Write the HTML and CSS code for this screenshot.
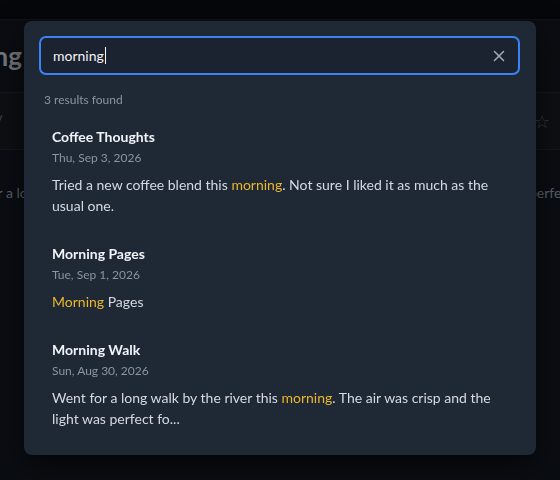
FILE: index.html
```html
<!DOCTYPE html>
<html lang="en">
<head>
<meta charset="utf-8">
<title>Journal — Search</title>
<link rel="stylesheet" href="styles.css">
</head>
<body>
  <!-- the journal page underneath the dialog -->
  <div class="page">
    <div class="topbar"></div>
    <header class="page-header">
      <div class="title-slot">
        <h1 class="page-title">Good Morning</h1>
      </div>
    </header>
    <div class="toolbar">
      <span class="tool-left">/</span>
      <span class="tool-right">&#x2606;</span>
    </div>
    <div class="page-body">
      <span class="text-start">for a long walk by the river this morning. The air was crisp and the light was</span>
      <span class="text-end">perfect for photos.</span>
    </div>
  </div>

  <div class="overlay">
    <div class="search-dialog">
      <div class="search-field">
        <span class="search-value">morning</span><span class="caret"></span>
        <button class="clear-btn" aria-label="Clear search">
          <svg width="12" height="12" viewBox="0 0 12 12" fill="none" stroke="currentColor" stroke-width="1.5" stroke-linecap="round">
            <path d="M1.5 1.5 L10.5 10.5 M10.5 1.5 L1.5 10.5"/>
          </svg>
        </button>
      </div>

      <div class="result-count">3 results found</div>

      <ul class="results">
        <li class="result">
          <div class="result-title">Coffee Thoughts</div>
          <div class="result-date">Thu, Sep 3, 2026</div>
          <p class="result-snippet">Tried a new coffee blend this <mark>morning</mark>. Not sure I liked it as much as the usual one.</p>
        </li>
        <li class="result">
          <div class="result-title">Morning Pages</div>
          <div class="result-date">Tue, Sep 1, 2026</div>
          <p class="result-snippet"><mark>Morning</mark> Pages</p>
        </li>
        <li class="result">
          <div class="result-title">Morning Walk</div>
          <div class="result-date">Sun, Aug 30, 2026</div>
          <p class="result-snippet">Went for a long walk by the river this <mark>morning</mark>. The air was crisp and the light was perfect fo...</p>
        </li>
      </ul>
    </div>
  </div>
</body>
</html>
```

FILE: styles.css
```css
* {
  box-sizing: border-box;
}

html, body {
  margin: 0;
  height: 100%;
}

body {
  background: #0a0d12;
  font-family: "Segoe UI", Lato, "Noto Sans", sans-serif;
  overflow: hidden;
}

/* ---------- page behind the dialog (already dimmed) ---------- */
.page {
  display: flex;
  flex-direction: column;
  height: 100%;
}

.topbar {
  height: 20px;
  background: #05070b;
  border-bottom: 1px solid #0f1217;
}

.page-header {
  height: 73px;
  background: #0b0d12;
  border-bottom: 1px solid #14171c;
  display: flex;
  align-items: center;
}

/* title is wider than its slot; it hangs off to the left */
.title-slot {
  width: 22px;
  display: flex;
  justify-content: flex-end;
}

.page-title {
  margin: 0;
  font-size: 26px;
  font-weight: 700;
  color: #74787f;
  white-space: nowrap;
}

.toolbar {
  height: 57px;
  background: #0d0f13;
  border-bottom: 1px solid #14171c;
  display: flex;
  align-items: center;
  justify-content: space-between;
  color: #3c4047;
  font-size: 18px;
  overflow: hidden;
}

.tool-left {
  margin-left: -5px;
}

.tool-right {
  margin-right: 10px;
}

.page-body {
  flex: 1;
  background: #0a0d12;
  display: grid;
  grid-template-columns: 529px 1fr;
  align-items: start;
  padding-top: 34px;
  font-size: 14px;
  color: #5b6068;
  overflow: hidden;
}

.text-start {
  margin-left: -15px;
  white-space: nowrap;
  overflow: hidden;
}

.text-end {
  white-space: nowrap;
}

/* ---------- search dialog ---------- */
.overlay {
  position: fixed;
  inset: 0;
}

.search-dialog {
  position: absolute;
  left: 24px;
  top: 21px;
  width: 512px;
  padding: 15px 16px 14px 15px;
  background: #1f2835;
  border-radius: 8px;
  box-shadow: 0 10px 30px rgba(0, 0, 0, 0.6);
}

.search-field {
  height: 39px;
  display: flex;
  align-items: center;
  padding: 0 13px 0 12px;
  border: 2px solid #3b82f6;
  border-radius: 7px;
  background: #1b2330;
}

.search-value {
  font-size: 14px;
  color: #f3f4f6;
}

.caret {
  width: 1px;
  height: 17px;
  margin-left: 1px;
  background: #f3f4f6;
}

.clear-btn {
  margin-left: auto;
  padding: 0;
  border: 0;
  background: none;
  color: #a3abb7;
  display: flex;
}

.result-count {
  margin: 17px 0 8px 5px;
  font-size: 12px;
  line-height: 16px;
  color: #8a94a2;
}

.results {
  list-style: none;
  margin: 0;
  padding: 0;
  display: flex;
  flex-direction: column;
  gap: 5px;
}

.result {
  padding: 11px 12px 12px 13px;
  border-radius: 6px;
}

.result-title {
  font-size: 14px;
  line-height: 20px;
  font-weight: 700;
  color: #f1f4f8;
}

.result-date {
  margin-top: 3px;
  font-size: 12px;
  line-height: 16px;
  color: #8a94a2;
}

.result-snippet {
  margin: 8px 0 0;
  font-size: 14px;
  line-height: 21px;
  color: #d5dae1;
}

.result-snippet mark {
  background: none;
  color: #eab72c;
}
```
